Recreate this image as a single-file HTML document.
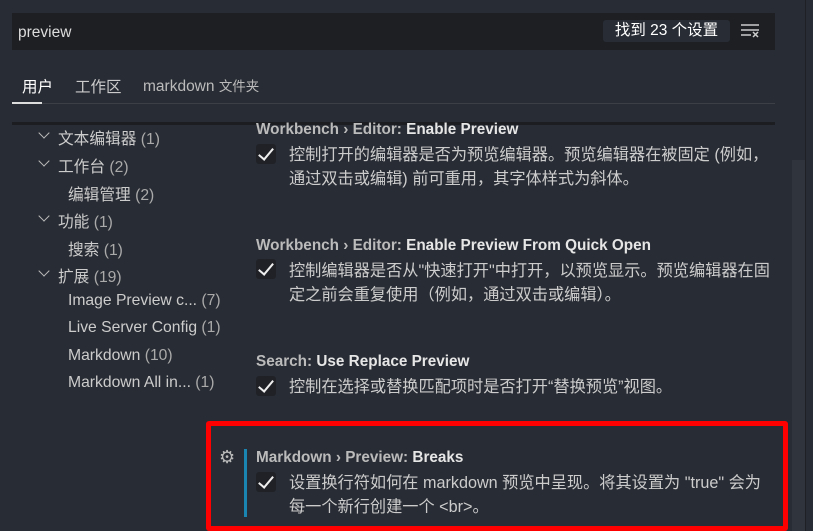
<!DOCTYPE html>
<html><head><meta charset="utf-8"><style>
body{margin:0;width:813px;height:531px;background:#282c34;overflow:hidden;position:relative;font-family:"Liberation Sans","Noto Sans CJK SC",sans-serif;color:#ccc}
.a{position:absolute;white-space:nowrap}
.search{left:12px;top:13px;width:763px;height:37px;background:#1e1f23}
.cnt{left:603px;top:20px;width:127px;height:22px;background:#282c34;border-radius:3px;color:#fff;font-size:15.5px;line-height:22px;text-align:center}
.tree{font-size:15.7px;color:#ccc}
.tree span{color:#aaa}
.chev{width:7px;height:7px;border-right:1.5px solid #bbb;border-bottom:1.5px solid #bbb;transform:rotate(45deg)}
.t{font-size:15.3px;color:#bbb;font-weight:bold}
.t b{color:#e6e6e6}
.d{font-size:16.2px;color:#ccc;line-height:24px}
.cb{width:20px;height:20px;background:#1f2127;border-radius:3px}
.cb:after{content:"";position:absolute;left:6px;top:1px;width:6px;height:13px;border-right:2px solid #eee;border-bottom:2px solid #eee;transform:rotate(40deg)}
</style></head><body>
<div class="a search"></div>
<div class="a" style="left:18px;top:24px;font-size:15.5px;color:#ddd">preview</div>
<div class="a cnt">找到 23 个设置</div>
<svg class="a" style="left:740px;top:23px" width="20" height="16"><g stroke="#ccc" stroke-width="1.5"><line x1="1" y1="2" x2="19" y2="2"/><line x1="1" y1="7" x2="19" y2="7"/><line x1="1" y1="12" x2="11" y2="12"/><line x1="13" y1="9" x2="18" y2="14"/><line x1="18" y1="9" x2="13" y2="14"/></g></svg>
<div class="a" style="left:22px;top:75px;font-size:15.5px;color:#fff">用户</div>
<div class="a" style="left:75px;top:75px;font-size:15.5px;color:#ccc">工作区</div>
<div class="a" style="left:143px;top:75px;font-size:15.5px;color:#bbb">markdown <span style="font-size:13.5px">文件夹</span></div>
<div class="a" style="left:12px;top:103px;width:763px;height:1px;background:#3c3f45"></div>
<div class="a" style="left:12px;top:102px;width:30px;height:2px;background:#ddd"></div>
<div class="a" style="left:12px;top:122px;width:763px;height:3px;background:#1b1d21"></div>
<div class="a" style="left:805px;top:0;width:1px;height:531px;background:#1e2025"></div>
<div class="a" style="left:792px;top:160px;width:13px;height:371px;background:#30343c"></div>
<div class="a tree" style="left:0;top:0">
<div class="a chev" style="left:40px;top:129px"></div><div class="a" style="left:58px;top:126px">文本编辑器 <span>(1)</span></div>
<div class="a chev" style="left:40px;top:157px"></div><div class="a" style="left:58px;top:154px">工作台 <span>(2)</span></div>
<div class="a" style="left:68px;top:182px">编辑管理 <span>(2)</span></div>
<div class="a chev" style="left:40px;top:212px"></div><div class="a" style="left:58px;top:209px">功能 <span>(1)</span></div>
<div class="a" style="left:68px;top:237px">搜索 <span>(1)</span></div>
<div class="a chev" style="left:40px;top:267px"></div><div class="a" style="left:58px;top:264px">扩展 <span>(19)</span></div>
<div class="a" style="left:68px;top:292px">Image Preview c... <span>(7)</span></div>
<div class="a" style="left:68px;top:319px">Live Server Config <span>(1)</span></div>
<div class="a" style="left:68px;top:347px">Markdown <span>(10)</span></div>
<div class="a" style="left:68px;top:374px">Markdown All in... <span>(1)</span></div>
</div>
<div class="a t" style="left:256px;top:121px">Workbench › Editor: <b>Enable Preview</b></div>
<div class="a cb" style="left:256px;top:144px"></div>
<div class="a d" style="left:289px;top:143px">控制打开的编辑器是否为预览编辑器。预览编辑器在被固定 (例如，<br>通过双击或编辑) 前可重用，其字体样式为斜体。</div>
<div class="a t" style="left:256px;top:237px">Workbench › Editor: <b>Enable Preview From Quick Open</b></div>
<div class="a cb" style="left:256px;top:259px"></div>
<div class="a d" style="left:289px;top:259px">控制编辑器是否从"快速打开"中打开，以预览显示。预览编辑器在固<br>定之前会重复使用（例如，通过双击或编辑）。</div>
<div class="a t" style="left:256px;top:353px">Search: <b>Use Replace Preview</b></div>
<div class="a cb" style="left:256px;top:376px"></div>
<div class="a d" style="left:289px;top:375px">控制在选择或替换匹配项时是否打开“替换预览”视图。</div>
<div class="a" style="left:206px;top:421px;width:572px;height:100px;border:5px solid #f00;border-radius:3px"></div>
<div class="a" style="left:244px;top:449px;width:3px;height:68px;background:#1a85b0"></div>
<div class="a" style="left:219px;top:447px;font-size:18px;color:#bbb">⚙</div>
<div class="a t" style="left:256px;top:449px">Markdown › Preview: <b>Breaks</b></div>
<div class="a cb" style="left:256px;top:472px"></div>
<div class="a d" style="left:289px;top:471px">设置换行符如何在 markdown 预览中呈现。将其设置为 "true" 会为<br>每一个新行创建一个 &lt;br&gt;。</div>
</body></html>
